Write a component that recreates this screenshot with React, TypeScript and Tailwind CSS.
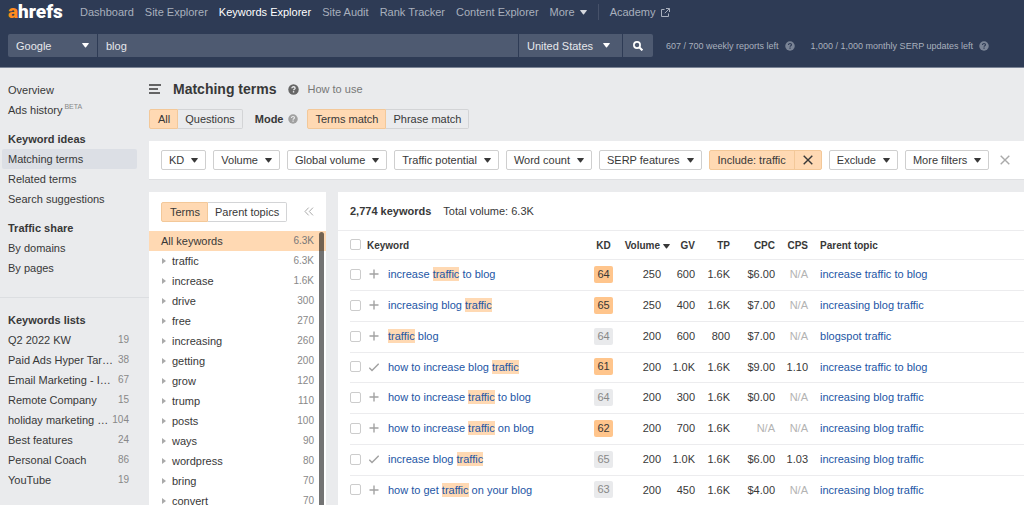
import React from "react";

function Caret({ className = "" }: { className?: string }) {
  return (
    <svg viewBox="0 0 7 5" className={`h-[5px] w-[7px] shrink-0 fill-current ${className}`} aria-hidden="true">
      <path d="M0.7 0h5.6c.5 0 .7.5.4.8L4 4.2c-.3.3-.7.3-1 0L.3.8C0 .5.2 0 .7 0z" />
    </svg>
  );
}

function Help({ className = "" }: { className?: string }) {
  return (
    <svg viewBox="0 0 12 12" className={`shrink-0 ${className}`} aria-hidden="true">
      <circle cx="6" cy="6" r="5.7" fill="currentColor" />
      <path d="M4.2 4.7c0-1.1.8-1.7 1.8-1.7s1.8.6 1.8 1.5c0 1.2-1.7 1.2-1.7 2.4" fill="none" stroke="var(--mark)" strokeWidth="1.4" />
      <rect x="5.3" y="7.8" width="1.5" height="1.5" fill="var(--mark)" />
    </svg>
  );
}

function Cross({ className = "" }: { className?: string }) {
  return (
    <svg viewBox="0 0 10 10" className={`size-[10px] shrink-0 ${className}`} aria-hidden="true">
      <path d="M.7.7l8.6 8.6M9.3.7L.7 9.3" fill="none" stroke="currentColor" strokeWidth="1.4" />
    </svg>
  );
}

const navItems = ["Dashboard", "Site Explorer", "Keywords Explorer", "Site Audit", "Rank Tracker", "Content Explorer"];

function Header() {
  return (
    <header className="shrink-0 border-b border-[#7b8496] bg-[#2e3b55] px-2 pb-[10px] text-[#a9b0bd]">
      <nav className="flex h-6 items-center whitespace-nowrap" aria-label="Main">
        <a href="#home" className="w-[72px] font-[Roboto,sans-serif] text-[19px] leading-5 font-black text-white">
          <span className="text-[#ff8b1f]">a</span>hrefs
        </a>
        <div className="flex items-center gap-[11px]">
          {navItems.map((item) => (
            <a key={item} href="#nav" className={item === "Keywords Explorer" ? "text-white" : ""}>
              {item}
            </a>
          ))}
          <button type="button" className="flex items-center gap-[5px]">
            More <Caret className="text-[#d5d8de]" />
          </button>
          <span className="h-4 w-px bg-[#465169]" />
          <a href="#academy" className="flex items-center gap-[5px]">
            Academy
            <svg viewBox="0 0 9 9" className="size-[9px]" fill="none" stroke="currentColor" aria-hidden="true">
              <path d="M3.5 1.5h-3v7h7V5.500M5 .5h3.500v3.500M8.300.7L3.800 5.200" />
            </svg>
          </a>
        </div>
      </nav>
      <div className="mt-[10px] flex h-[23px] items-stretch">
        <form className="flex min-w-0 flex-1 gap-px text-[#e6e8ec]" onSubmit={(e) => e.preventDefault()}>
          <label className="relative flex w-[89px] shrink-0 items-center rounded-l-[2px] bg-[#4e5a71]">
            <select aria-label="Search engine" className="h-full w-full appearance-none px-2 outline-none">
              <option>Google</option>
            </select>
            <Caret className="pointer-events-none absolute right-2 text-white" />
          </label>
          <input aria-label="Keywords" defaultValue="blog" className="min-w-0 flex-1 bg-[#4e5a71] px-2 outline-none" />
          <label className="relative flex w-[103px] shrink-0 items-center bg-[#4e5a71]">
            <select aria-label="Country" className="h-full w-full appearance-none px-2 outline-none">
              <option>United States</option>
            </select>
            <Caret className="pointer-events-none absolute right-3 text-white" />
          </label>
          <button type="submit" aria-label="Search" className="flex w-[30px] items-center justify-center rounded-r-[2px] bg-[#4e5a71]">
            <svg viewBox="0 0 10 10" className="size-[10px]" fill="none" stroke="white" aria-hidden="true">
              <circle cx="4" cy="4" r="3.100" strokeWidth="1.700" />
              <path d="M6.300 6.300L9.400 9.400" strokeWidth="2" />
            </svg>
          </button>
        </form>
        <div className="flex w-[363px] items-center gap-4 pl-[13px] text-[9px] whitespace-nowrap [--mark:#2e3b55]">
          <span className="flex items-center gap-[6px]">
            607 / 700 weekly reports left <Help className="size-[10px] text-[#7a8496]" />
          </span>
          <span className="flex items-center gap-[6px]">
            1,000 / 1,000 monthly SERP updates left <Help className="size-[10px] text-[#7a8496]" />
          </span>
        </div>
      </div>
    </header>
  );
}

const lists: [string, number][] = [
  ["Q2 2022 KW", 19],
  ["Paid Ads Hyper Tar…", 38],
  ["Email Marketing - I…", 67],
  ["Remote Company", 15],
  ["holiday marketing …", 104],
  ["Best features", 24],
  ["Personal Coach", 86],
  ["YouTube", 19],
];

function SideLink({ label, active = false }: { label: string; active?: boolean }) {
  return (
    <a href="#section" className={`mr-3 ml-[2px] block rounded-[2px] px-[6px] leading-5 ${active ? "bg-[#dcdfe5]" : ""}`}>
      {label}
    </a>
  );
}

function Sidebar() {
  return (
    <aside className="w-[149px] shrink-0 pt-3">
      <SideLink label="Overview" />
      <a href="#ads" className="flex px-2 leading-5">
        Ads history<span className="ml-[2px] text-[7px] leading-[14px] text-[#888]">BETA</span>
      </a>
      <h2 className="mt-[9px] px-2 leading-5 font-bold">Keyword ideas</h2>
      <SideLink label="Matching terms" active />
      <SideLink label="Related terms" />
      <SideLink label="Search suggestions" />
      <h2 className="mt-[9px] px-2 leading-5 font-bold">Traffic share</h2>
      <SideLink label="By domains" />
      <SideLink label="By pages" />
      <div className="mt-[19px] border-t border-[#dcdee1] pt-3">
        <h2 className="px-2 leading-5 font-bold">Keywords lists</h2>
        {lists.map(([name, count]) => (
          <a key={name} href="#list" className="flex justify-between pr-5 pl-2 leading-5 whitespace-nowrap">
            <span>{name}</span>
            <span className="text-[10px] text-[#888]">{count}</span>
          </a>
        ))}
      </div>
    </aside>
  );
}

function Segmented({ options, label }: { options: string[]; label: string }) {
  return (
    <div role="group" aria-label={label} className="flex h-5 whitespace-nowrap">
      {options.map((o, i) => (
        <button
          key={o}
          type="button"
          aria-pressed={i === 0}
          className={
            i === 0
              ? "rounded-l-[2px] border border-[#f3c899] bg-[#ffd9b3] pr-[7px] pl-2"
              : "rounded-r-[2px] border border-l-0 border-[#d3d4d6] px-[7px]"
          }
        >
          {o}
        </button>
      ))}
    </div>
  );
}

function Filter({ label }: { label: string }) {
  return (
    <button type="button" aria-haspopup="menu" className="flex h-5 items-center gap-[7px] rounded-[2px] border border-[#cfcfcf] px-[7px]">
      {label} <Caret />
    </button>
  );
}

function Filters() {
  return (
    <div className="mt-3 flex h-[39px] items-center gap-[7px] border-b border-[#dfe0e2] bg-white px-3 whitespace-nowrap">
      <Filter label="KD" />
      <Filter label="Volume" />
      <Filter label="Global volume" />
      <Filter label="Traffic potential" />
      <Filter label="Word count" />
      <Filter label="SERP features" />
      <div className="flex h-5 rounded-[2px] border border-[#f3c899] bg-[#ffd9b3]">
        <button type="button" className="px-2">Include: traffic</button>
        <button type="button" aria-label="Remove include filter" className="flex w-[27px] items-center justify-center border-l border-[#f3c899]">
          <Cross />
        </button>
      </div>
      <Filter label="Exclude" />
      <Filter label="More filters" />
      <button type="button" aria-label="Clear filters" className="ml-1 text-[#aaa]">
        <Cross />
      </button>
    </div>
  );
}

const terms: [string, string][] = [
  ["traffic", "6.3K"],
  ["increase", "1.6K"],
  ["drive", "300"],
  ["free", "270"],
  ["increasing", "260"],
  ["getting", "200"],
  ["grow", "120"],
  ["trump", "110"],
  ["posts", "100"],
  ["ways", "90"],
  ["wordpress", "80"],
  ["bring", "70"],
  ["convert", "70"],
];

function TermsPanel() {
  return (
    <section className="relative w-[177px] shrink-0 overflow-hidden bg-white">
      <div className="flex h-[39px] items-center justify-between pr-3 pl-3">
        <Segmented label="Group by" options={["Terms", "Parent topics"]} />
        <button type="button" aria-label="Collapse panel" className="text-[#aaa]">
          <svg viewBox="0 0 10 9" className="h-[9px] w-[10px]" fill="none" stroke="currentColor" aria-hidden="true">
            <path d="M4.700.6L1 4.500l3.700 3.900M9 .6L5.300 4.500 9 8.400" />
          </svg>
        </button>
      </div>
      <ul className="leading-5">
        <li className="flex bg-[#ffd9b3] px-3">
          <span className="flex-1">All keywords</span>
          <span className="text-[10px] text-[#777]">6.3K</span>
        </li>
        {terms.map(([term, count]) => (
          <li key={term} className="flex items-center px-3">
            <svg viewBox="0 0 4 6" className="mr-[6px] ml-[1px] h-[6px] w-1 fill-[#aaa]" aria-hidden="true">
              <path d="M0 0l4 3-4 3z" />
            </svg>
            <span className="flex-1">{term}</span>
            <span className="text-[10px] text-[#888]">{count}</span>
          </li>
        ))}
      </ul>
      <div className="absolute top-10 right-[2px] -bottom-10 w-[5px] rounded-full bg-black/55" />
    </section>
  );
}

type Row = {
  keyword: string;
  added?: boolean;
  kd: number;
  hot?: boolean;
  volume: string;
  gv: string;
  tp: string;
  cpc: string;
  cps: string;
  parent: string;
};

const rows: Row[] = [
  { keyword: "increase traffic to blog", kd: 64, hot: true, volume: "250", gv: "600", tp: "1.6K", cpc: "$6.00", cps: "N/A", parent: "increase traffic to blog" },
  { keyword: "increasing blog traffic", kd: 65, hot: true, volume: "250", gv: "400", tp: "1.6K", cpc: "$7.00", cps: "N/A", parent: "increasing blog traffic" },
  { keyword: "traffic blog", kd: 64, volume: "200", gv: "600", tp: "800", cpc: "$7.00", cps: "N/A", parent: "blogspot traffic" },
  { keyword: "how to increase blog traffic", added: true, kd: 61, hot: true, volume: "200", gv: "1.0K", tp: "1.6K", cpc: "$9.00", cps: "1.10", parent: "increase traffic to blog" },
  { keyword: "how to increase traffic to blog", kd: 64, volume: "200", gv: "300", tp: "1.6K", cpc: "$0.00", cps: "N/A", parent: "increasing blog traffic" },
  { keyword: "how to increase traffic on blog", kd: 62, hot: true, volume: "200", gv: "700", tp: "1.6K", cpc: "N/A", cps: "N/A", parent: "increasing blog traffic" },
  { keyword: "increase blog traffic", added: true, kd: 65, volume: "200", gv: "1.0K", tp: "1.6K", cpc: "$6.00", cps: "1.03", parent: "increasing blog traffic" },
  { keyword: "how to get traffic on your blog", kd: 63, volume: "200", gv: "450", tp: "1.6K", cpc: "$4.00", cps: "N/A", parent: "increasing blog traffic" },
];

function Highlighted({ text }: { text: string }) {
  const [before, after] = text.split("traffic");
  return (
    <>
      {before}
      <mark className="bg-[#ffd9b3] py-px text-inherit">traffic</mark>
      {after}
    </>
  );
}

function Check({ label }: { label: string }) {
  return (
    <input
      type="checkbox"
      aria-label={label}
      className="block size-[11px] appearance-none rounded-[2px] border border-[#ccc] bg-white checked:bg-[#ffc48a]"
    />
  );
}

function Value({ value }: { value: string }) {
  return <span className={value === "N/A" ? "text-[#b3b3b3]" : ""}>{value}</span>;
}

function Results() {
  const head = "border-b border-[#ececee] p-0 pt-[2px]";
  const cell = "border-b border-[#ececee] p-0 pb-[2px]";
  return (
    <section className="min-w-0 flex-1 overflow-hidden bg-white">
      <div className="flex h-[39px] items-center gap-3 border-b border-[#ececee] px-3">
        <h2 className="font-bold">2,774 keywords</h2>
        <p>Total volume: 6.3K</p>
      </div>
      <table className="w-full table-fixed border-separate border-spacing-0 whitespace-nowrap">
        <colgroup>
          <col className="w-3" />
          <col className="w-[17px]" />
          <col className="w-[21px]" />
          <col className="w-[206px]" />
          <col className="w-[19px]" />
          <col className="w-[57px]" />
          <col className="w-[25px]" />
          <col className="w-[35px]" />
          <col className="w-[45px]" />
          <col className="w-[33px]" />
          <col />
        </colgroup>
        <thead>
          <tr className="h-[29px] text-[10px]">
            <td className={head} />
            <th className={cell}><Check label="Select all keywords" /></th>
            <th className={`${head} text-left`} colSpan={2}>Keyword</th>
            <th className={head}>KD</th>
            <th className={head}>
              <span className="flex items-center justify-end gap-[3px]">Volume <Caret className="h-1 w-[6px]" /></span>
            </th>
            <th className={`${head} text-right`}>GV</th>
            <th className={`${head} text-right`}>TP</th>
            <th className={`${head} text-right`}>CPC</th>
            <th className={`${head} text-right`}>CPS</th>
            <th className={`${head} pl-3 text-left`}>Parent topic</th>
          </tr>
        </thead>
        <tbody>
          {rows.map((r) => (
            <tr key={r.keyword} className="h-[31px] nth-[4n]:h-[30px]">
              <td className="p-0" />
              <td className={cell}><Check label={`Select ${r.keyword}`} /></td>
              <td className={cell}>
                <button type="button" aria-label={r.added ? "Added to list" : "Add to list"} className="ml-[2px] block text-[#a3a3a3]">
                  <svg viewBox="0 0 10 10" className="size-[10px]" fill="none" stroke="currentColor" strokeWidth="1.400" aria-hidden="true">
                    <path d={r.added ? "M.3 5.800l2.700 2.700L9.700 1.700" : "M5 .5v9M.5 5h9"} />
                  </svg>
                </button>
              </td>
              <td className={cell}>
                <a href="#keyword" className="text-[#1d56a5]"><Highlighted text={r.keyword} /></a>
              </td>
              <td className={cell}>
                <span className={`block rounded-[2px] text-center leading-[17px] ${r.hot ? "bg-[#ffc58c]" : "bg-[#e9eaec] text-[#888]"}`}>{r.kd}</span>
              </td>
              <td className={`${cell} pr-[9px] text-right`}>{r.volume}</td>
              <td className={`${cell} text-right`}>{r.gv}</td>
              <td className={`${cell} text-right`}>{r.tp}</td>
              <td className={`${cell} text-right`}><Value value={r.cpc} /></td>
              <td className={`${cell} text-right`}><Value value={r.cps} /></td>
              <td className={`${cell} pl-3`}>
                <a href="#parent" className="text-[#1d56a5]">{r.parent}</a>
              </td>
            </tr>
          ))}
        </tbody>
      </table>
    </section>
  );
}

export default function App() {
  return (
    <div className="flex h-screen flex-col overflow-hidden bg-[#eaebed] font-['Liberation_Sans',Arial,sans-serif] text-[11px] leading-[14px] text-[#383838]">
      <Header />
      <div className="flex min-h-0 flex-1">
        <Sidebar />
        <main className="flex min-w-0 flex-1 flex-col">
          <div className="mt-[11px] flex h-5 items-center">
            <button type="button" aria-label="Toggle menu">
              <svg viewBox="0 0 12 10" className="h-[10px] w-3" fill="none" stroke="currentColor" strokeWidth="1.500" aria-hidden="true">
                <path d="M0 1h12M0 5h9M0 9h11" />
              </svg>
            </button>
            <h1 className="ml-3 text-sm font-bold">Matching terms</h1>
            <a href="#help" className="ml-3 flex items-center gap-2 text-[#777] [--mark:#eaebed]">
              <Help className="size-[11px] text-[#666]" /> How to use
            </a>
          </div>
          <div className="mt-[10px] flex items-center">
            <Segmented label="Keyword type" options={["All", "Questions"]} />
            <span className="ml-3 flex items-center gap-1 font-bold [--mark:#eaebed]">
              Mode <Help className="size-[10px] text-[#a0a0a0]" />
            </span>
            <div className="ml-[9px]">
              <Segmented label="Match mode" options={["Terms match", "Phrase match"]} />
            </div>
          </div>
          <Filters />
          <div className="mt-3 flex min-h-0 flex-1 gap-3">
            <TermsPanel />
            <Results />
          </div>
        </main>
      </div>
    </div>
  );
}
